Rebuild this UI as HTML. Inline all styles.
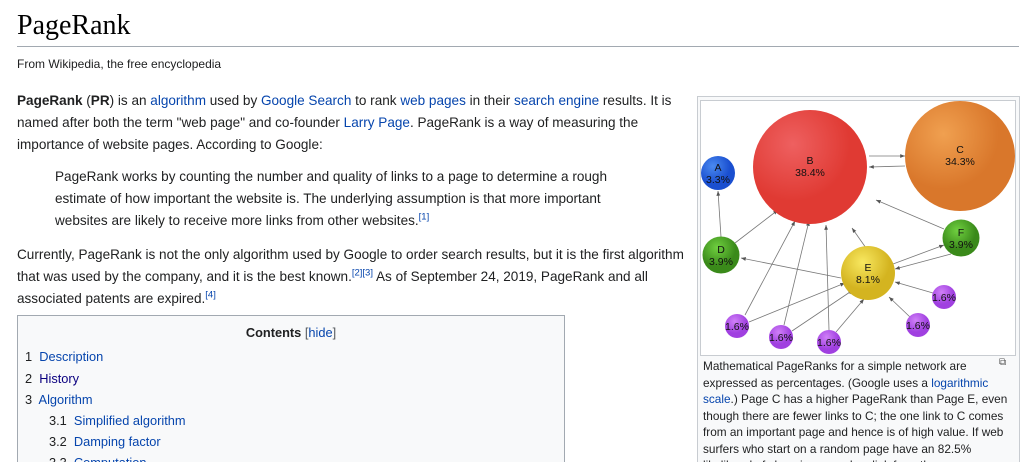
<!DOCTYPE html>
<html><head><style>
html,body{margin:0;width:1024px;height:462px;overflow:hidden}
body{background:#fff;font-family:"Liberation Sans",sans-serif;color:#202122;position:relative}
a{color:#0645ad;text-decoration:none}
.abs{position:absolute;white-space:nowrap}
h1{position:absolute;left:17px;top:10px;margin:0;font:400 28px "Liberation Serif",serif;color:#000}
.rule{position:absolute;left:17px;top:46px;width:1002px;height:1px;background:#a2a9b1}
.p{position:absolute;font-size:13.55px;line-height:22px;white-space:nowrap}
sup{font-size:9.5px;line-height:0;vertical-align:super}
.toc{position:absolute;left:17px;top:315px;width:546px;height:160px;border:1px solid #a2a9b1;background:#f8f9fa;font-size:12.8px}
.toc div{position:absolute;white-space:nowrap}
.ib{position:absolute;left:697px;top:96px;width:321px;height:380px;border:1px solid #c8ccd1;background:#f8f9fa}
.cap{position:absolute;left:703px;top:358px;font-size:11.8px;line-height:16.5px;white-space:nowrap}
</style></head><body>
<h1>PageRank</h1>
<div class="rule"></div>
<div class="abs" style="left:17px;top:57px;font-size:12px">From Wikipedia, the free encyclopedia</div>
<div class="p" style="left:17px;top:90px"><b>PageRank</b> (<b>PR</b>) is an <a>algorithm</a> used by <a>Google Search</a> to rank <a>web pages</a> in their <a>search engine</a> results. It is<br>named after both the term "web page" and co-founder <a>Larry Page</a>. PageRank is a way of measuring the<br>importance of website pages. According to Google:</div>
<div class="p" style="left:55px;top:166px">PageRank works by counting the number and quality of links to a page to determine a rough<br>estimate of how important the website is. The underlying assumption is that more important<br>websites are likely to receive more links from other websites.<sup><a>[1]</a></sup></div>
<div class="p" style="left:17px;top:244px">Currently, PageRank is not the only algorithm used by Google to order search results, but it is the first algorithm<br>that was used by the company, and it is the best known.<sup><a>[2][3]</a></sup> As of September 24, 2019, PageRank and all<br>associated patents are expired.<sup><a>[4]</a></sup></div>
<div class="toc">
<div style="left:0;width:546px;text-align:center;top:9px"><b>Contents</b> <span style="color:#54595d">[<a>hide</a>]</span></div>
<div style="left:7px;top:33px">1&nbsp; <a>Description</a></div>
<div style="left:7px;top:55px">2&nbsp; <a style="color:#0b0080">History</a></div>
<div style="left:7px;top:76px">3&nbsp; <a>Algorithm</a></div>
<div style="left:31px;top:97px">3.1&nbsp; <a>Simplified algorithm</a></div>
<div style="left:31px;top:118px">3.2&nbsp; <a>Damping factor</a></div>
<div style="left:31px;top:139px">3.3&nbsp; <a>Computation</a></div>
</div>
<div class="ib"></div>
<svg style="position:absolute;left:700px;top:100px" width="316" height="256" viewBox="700 100 316 256">
<defs>
<marker id="ar" viewBox="0 0 10 10" refX="10" refY="5" markerWidth="6" markerHeight="6" orient="auto"><path d="M0 1L10 5L0 9z" fill="#555"/></marker>
<radialGradient id="gr" cx="35%" cy="30%"><stop offset="0" stop-color="#ee6060"/><stop offset="1" stop-color="#e03a33"/></radialGradient>
<radialGradient id="go" cx="35%" cy="30%"><stop offset="0" stop-color="#f0a050"/><stop offset="1" stop-color="#d9772b"/></radialGradient>
<radialGradient id="gb" cx="35%" cy="30%"><stop offset="0" stop-color="#4a8af0"/><stop offset="1" stop-color="#1a4fd0"/></radialGradient>
<radialGradient id="gg" cx="40%" cy="30%"><stop offset="0" stop-color="#70d040"/><stop offset="1" stop-color="#3a8a1a"/></radialGradient>
<radialGradient id="gy" cx="40%" cy="30%"><stop offset="0" stop-color="#f8e860"/><stop offset="1" stop-color="#d4b420"/></radialGradient>
<radialGradient id="gp" cx="40%" cy="30%"><stop offset="0" stop-color="#d080f8"/><stop offset="1" stop-color="#a040e0"/></radialGradient>
</defs>
<rect x="700.5" y="100.5" width="315" height="255" fill="#fff" stroke="#c8ccd1"/>
<g stroke="#777" stroke-width="0.8" fill="none" marker-end="url(#ar)">
<line x1="866" y1="248" x2="852" y2="228"/><line x1="721" y1="237" x2="718" y2="191"/>
<line x1="735" y1="243" x2="778" y2="210"/><line x1="841" y1="278" x2="741" y2="258"/>
<line x1="745" y1="315" x2="795" y2="221"/><line x1="784" y1="325" x2="809" y2="221"/>
<line x1="829" y1="330" x2="826" y2="225"/><line x1="749" y1="322" x2="845" y2="283"/>
<line x1="792" y1="331" x2="853" y2="290"/><line x1="836" y1="332" x2="864" y2="299"/>
<line x1="910" y1="317" x2="889" y2="297"/><line x1="933" y1="293" x2="895" y2="282"/>
<line x1="944" y1="229" x2="876" y2="200"/><line x1="893" y1="264" x2="944" y2="245"/>
<line x1="951" y1="254" x2="895" y2="269"/><line x1="869" y1="156" x2="905" y2="156"/>
<line x1="905" y1="166" x2="869" y2="167"/>
</g>
<circle cx="810" cy="167" r="57" fill="url(#gr)"/>
<circle cx="960" cy="156" r="55" fill="url(#go)"/>
<circle cx="718" cy="173" r="17" fill="url(#gb)"/>
<circle cx="721" cy="255" r="18.5" fill="url(#gg)"/>
<circle cx="961" cy="238" r="18.5" fill="url(#gg)"/>
<circle cx="868" cy="273" r="27" fill="url(#gy)"/>
<g fill="url(#gp)"><circle cx="737" cy="326" r="12"/><circle cx="781" cy="337" r="12"/><circle cx="829" cy="342" r="12"/><circle cx="918" cy="325" r="12"/><circle cx="944" cy="297" r="12"/></g>
<g font-family="Liberation Sans" font-size="10.5" text-anchor="middle" fill="#111">
<text x="810" y="164">B</text><text x="810" y="176">38.4%</text>
<text x="960" y="153">C</text><text x="960" y="165">34.3%</text>
<text x="718" y="171">A</text><text x="718" y="183">3.3%</text>
<text x="721" y="253">D</text><text x="721" y="265">3.9%</text>
<text x="961" y="236">F</text><text x="961" y="248">3.9%</text>
<text x="868" y="271">E</text><text x="868" y="283">8.1%</text>
<text x="737" y="330">1.6%</text><text x="781" y="341">1.6%</text><text x="829" y="346">1.6%</text><text x="918" y="329">1.6%</text><text x="944" y="301">1.6%</text>
</g>
</svg>
<div class="abs" style="left:999px;top:357px;font-size:10px;color:#555">⧉</div>
<div class="cap">Mathematical PageRanks for a simple network are<br>expressed as percentages. (Google uses a <a>logarithmic</a><br><a>scale</a>.) Page C has a higher PageRank than Page E, even<br>though there are fewer links to C; the one link to C comes<br>from an important page and hence is of high value. If web<br>surfers who start on a random page have an 82.5%<br>likelihood of choosing a random link from the page</div>
</body></html>
